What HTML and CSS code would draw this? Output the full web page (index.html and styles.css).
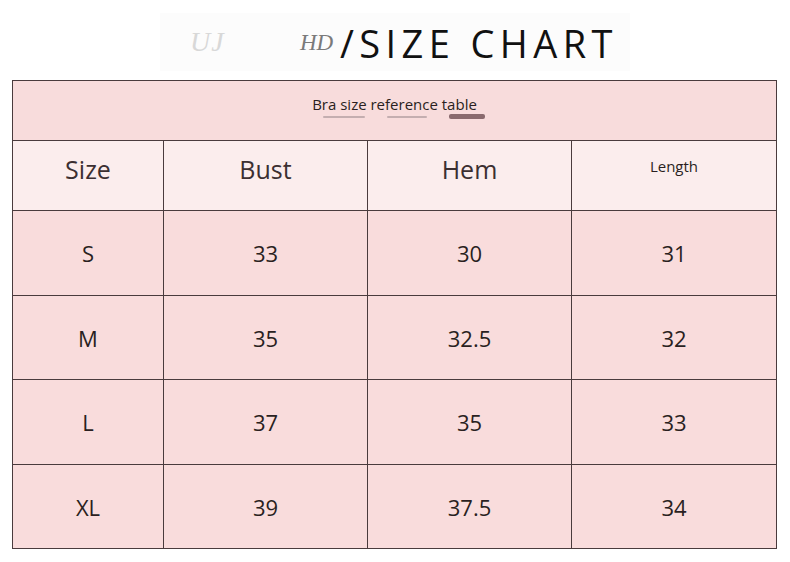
FILE: index.html
```html
<!DOCTYPE html>
<html>
<head>
<meta charset="utf-8">
<link rel="stylesheet" href="styles.css">
</head>
<body>
<div class="page">
  <div class="title-wrap">
    <div class="title"><span class="ghost g1">UJ</span><span class="ghost g2">HD</span><span class="main">/SIZE CHART</span></div>
  </div>
  <table class="chart">
    <colgroup>
      <col class="c1"><col class="c2"><col class="c3"><col class="c4">
    </colgroup>
    <tr class="caption-row">
      <td colspan="4"><div class="cap-text">Bra size reference table</div><div class="cap-smudge"><span class="s1"></span><span class="s2"></span><span class="s3"></span></div></td>
    </tr>
    <tr class="head-row">
      <td class="big">Size</td><td class="big">Bust</td><td class="big">Hem</td><td class="small">Length</td>
    </tr>
    <tr class="data-row"><td>S</td><td>33</td><td>30</td><td>31</td></tr>
    <tr class="data-row alt"><td>M</td><td>35</td><td>32.5</td><td>32</td></tr>
    <tr class="data-row"><td>L</td><td>37</td><td>35</td><td>33</td></tr>
    <tr class="data-row alt"><td>XL</td><td>39</td><td>37.5</td><td>34</td></tr>
  </table>
</div>
</body>
</html>
```
FILE: styles.css
```css
html, body {
  margin: 0;
  padding: 0;
  background: #ffffff;
}
body {
  font-family: "Open Sans", "Noto Sans", sans-serif;
  color: #2e2325;
}
.page {
  width: 790px;
  height: 562px;
  padding: 0 0 0 12px;
  box-sizing: border-box;
}
.title-wrap {
  height: 80px;
  display: flex;
  padding-left: 148px;
}
.title {
  margin-top: 13px;
  height: 58px;
  width: 470px;
  padding-left: 30px;
  box-sizing: border-box;
  background: #fcfcfc;
  display: flex;
  align-items: center;
  font-size: 38px;
  line-height: 1;
  white-space: nowrap;
}
.ghost {
  display: inline-block;
  font-family: "Liberation Serif", serif;
  font-style: italic;
  font-size: 28px;
  letter-spacing: 1px;
}
.g1 {
  color: #d8d8d8;
  width: 110px;
}
.g2 {
  color: #7a7a7a;
  font-size: 23px;
  letter-spacing: 0;
  width: 40px;
}
.main {
  color: #111111;
  letter-spacing: 5.4px;
  margin-top: 1px;
}
.chart {
  border-collapse: collapse;
  width: 764px;
  table-layout: fixed;
}
.c1 { width: 151px; }
.c2 { width: 204px; }
.c3 { width: 204px; }
.c4 { width: 205px; }
.chart td {
  border: 1px solid #4a3b3d;
  text-align: center;
  padding: 0;
}
.caption-row td {
  height: 59px;
  background: #f8dcdc;
  vertical-align: top;
}
.cap-text {
  font-size: 15px;
  margin-top: 13px;
  line-height: 20px;
  color: #2a1f21;
}
.cap-smudge {
  display: flex;
  justify-content: center;
  align-items: center;
  gap: 22px;
  margin-top: 0;
  padding-left: 18px;
}
.cap-smudge span {
  display: block;
  height: 2px;
  border-radius: 2px;
  background: #c4aeb0;
}
.s1 { width: 42px; }
.s2 { width: 40px; }
.s3 { width: 36px; height: 5px !important; background: #8a6a6e !important; }
.head-row td {
  background: #fbeded;
  vertical-align: top;
  color: #3b2f31;
}
.head-row .big {
  font-size: 25px;
  line-height: 30px;
  padding-top: 13px;
  height: 56px;
}
.head-row .small {
  font-size: 15px;
  line-height: 20px;
  padding-top: 15px;
  height: 54px;
  color: #2a1f21;
}
.data-row td {
  height: 84px;
  background: #f9dcdc;
  font-size: 22px;
  vertical-align: middle;
  color: #2a1f21;
}
.data-row.alt td {
  height: 83px;
}
```
